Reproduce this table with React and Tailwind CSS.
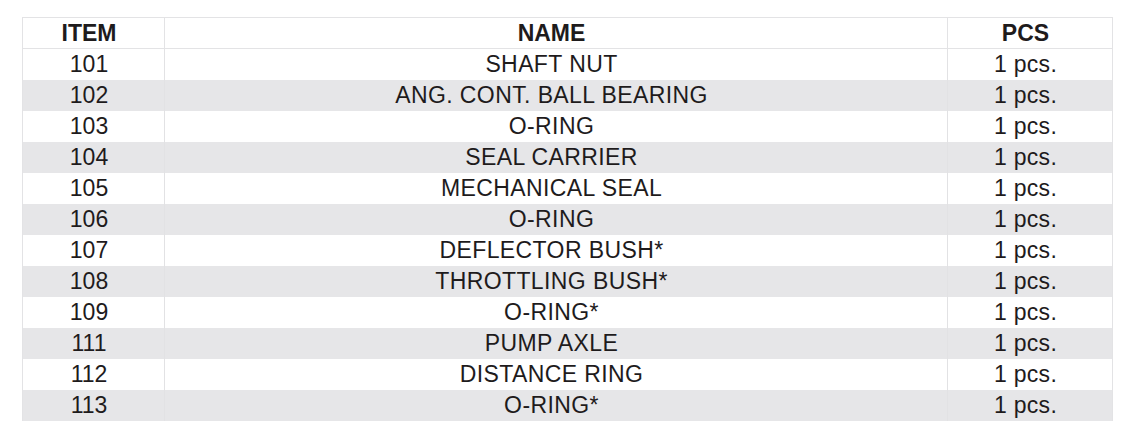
import React from "react";

const rows = [
  ["101", "SHAFT NUT"],
  ["102", "ANG. CONT. BALL BEARING"],
  ["103", "O-RING"],
  ["104", "SEAL CARRIER"],
  ["105", "MECHANICAL SEAL"],
  ["106", "O-RING"],
  ["107", "DEFLECTOR BUSH*"],
  ["108", "THROTTLING BUSH*"],
  ["109", "O-RING*"],
  ["111", "PUMP AXLE"],
  ["112", "DISTANCE RING"],
  ["113", "O-RING*"],
];

export default function App() {
  return (
    <div
      className="w-[1140px] h-[437px] bg-white pt-[17px] pl-[22px] text-[#1e1b1c]"
      style={{ fontFamily: '"Liberation Sans", Arial, sans-serif' }}
    >
      <div className="w-[1091px] border-t border-l border-r border-[#e3e3e5]">
        <div className="grid grid-cols-[142px_783px_164px] h-[31px] border-b border-[#e3e3e5] text-[23px] font-bold leading-none">
          <div className="flex items-center justify-center pr-[9px] border-r border-[#e3e3e5]">ITEM</div>
          <div className="flex items-center justify-center pr-[9px] border-r border-[#e3e3e5]">NAME</div>
          <div className="flex items-center justify-center pr-[9px]">PCS</div>
        </div>
        {rows.map(([item, name], i) => (
          <div
            key={i}
            className={
              "grid grid-cols-[142px_783px_164px] h-[31px] text-[23px] leading-none " +
              (i % 2 === 1 ? "bg-[#e6e6e8]" : "bg-white")
            }
          >
            <div className="flex items-center justify-center pr-[9px] border-r border-[#e2e2e4]">{item}</div>
            <div className="flex items-center justify-center pr-[9px] border-r border-[#e2e2e4] tracking-[0.4px]">{name}</div>
            <div className="flex items-center justify-center pr-[9px] tracking-[0.3px]">1 pcs.</div>
          </div>
        ))}
      </div>
    </div>
  );
}
